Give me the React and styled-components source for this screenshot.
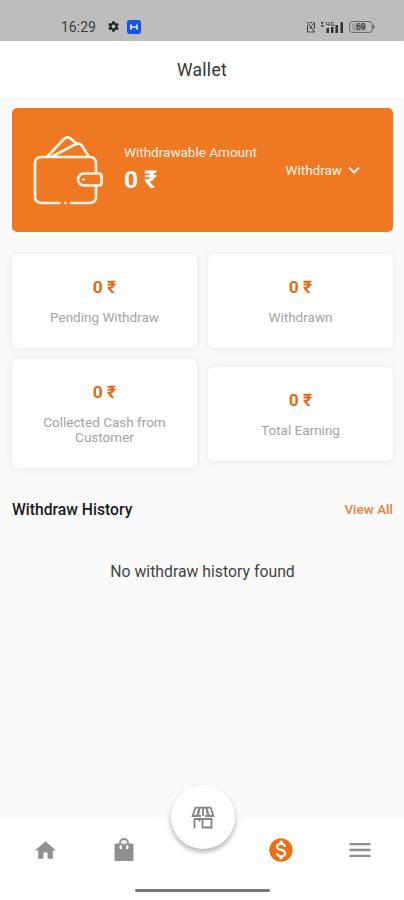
import React from "react";
import styled, { createGlobalStyle } from "styled-components";
import {
  MdHome,
  MdMenu,
  MdMonetizationOn,
  MdSettings,
} from "react-icons/md";

const GlobalStyle = createGlobalStyle`
  * {
    box-sizing: border-box;
  }

  body {
    background: #fafafa;
    font-family: Roboto, "Noto Sans", sans-serif;
    margin: 0;
  }
`;

const Screen = styled.div`
  background: #fafafa;
  display: flex;
  flex-direction: column;
  height: 900px;
  overflow: hidden;
  width: 404px;
`;

const StatusBar = styled.div`
  align-items: center;
  background: #bdbdbd;
  color: #222;
  display: flex;
  flex: none;
  height: 41px;
  justify-content: space-between;
  padding: 12px 29px 0 61px;
`;

const StatusGroup = styled.div`
  align-items: center;
  display: flex;
  gap: ${({ $gap }) => $gap}px;
`;

const Clock = styled.span`
  color: #3c3c3c;
  font-size: 14px;
  line-height: 16px;
  margin-right: 4px;
`;

const Header = styled.header`
  align-items: center;
  background: #fff;
  box-shadow: 0 1px 3px rgba(0, 0, 0, 0.03);
  display: flex;
  flex: none;
  height: 57px;
  justify-content: center;
`;

const Title = styled.h1`
  color: #333;
  font-size: 17.5px;
  font-weight: 400;
  letter-spacing: 0.3px;
  margin: 0;
`;

const Content = styled.main`
  flex: 1;
  padding: 10px 11px 0 12px;
`;

const BalanceCard = styled.section`
  align-items: center;
  background: #ef7822;
  border-radius: 5px;
  color: #fff5ea;
  display: flex;
  height: 124px;
  padding: 0 33px 0 21px;
`;

const Balance = styled.div`
  flex: 1;
  margin-left: 21px;
  padding-bottom: 2px;
`;

const BalanceLabel = styled.div`
  font-size: 13.5px;
  line-height: 16px;
`;

const BalanceAmount = styled.div`
  color: #fff;
  font-size: 24.5px;
  font-weight: 700;
  line-height: 29px;
  margin-top: 5px;
`;

const WithdrawButton = styled.button`
  align-items: center;
  background: none;
  border: 0;
  color: inherit;
  display: flex;
  font-family: inherit;
  font-size: 13.5px;
  gap: 6px;
  padding: 0;
`;

const Stats = styled.section`
  align-items: center;
  display: grid;
  gap: 11px;
  grid-template-columns: repeat(2, 1fr);
  margin-top: 22px;
`;

const StatCard = styled.div`
  background: #fff;
  border-radius: 6px;
  box-shadow: 0 0 7px rgba(0, 0, 0, 0.08);
  padding: 23px 20px 23px;
  text-align: center;
`;

const StatValue = styled.div`
  color: #e26a10;
  font-size: 17.4px;
  font-weight: 700;
  line-height: 21px;
`;

const StatLabel = styled.div`
  color: #a3a3a3;
  font-size: 13.5px;
  line-height: 15px;
  margin-top: 12px;
`;

const HistoryHeader = styled.div`
  align-items: center;
  display: flex;
  justify-content: space-between;
  margin-top: 32px;
`;

const HistoryTitle = styled.h2`
  color: #1a1a1a;
  font-size: 15.7px;
  font-weight: 500;
  line-height: 20px;
  margin: 0;
`;

const ViewAll = styled.a`
  color: #ec8138;
  font-size: 13.5px;
  font-weight: 500;
  line-height: 15px;
  padding-bottom: 1px;
`;

const EmptyText = styled.p`
  color: #444;
  font-size: 15.8px;
  line-height: 20px;
  margin: 42px 0 0;
  text-align: center;
`;

const BottomBar = styled.footer`
  flex: none;
  height: 82px;
  position: relative;
`;

const BarShape = styled.svg`
  display: block;
  left: 0;
  position: absolute;
  top: 0;
`;

const Nav = styled.nav`
  color: #8f8f8f;
  display: grid;
  grid-template-columns: 90px 68px 88px 70px 88px;
  height: 64px;
  position: relative;
`;

const NavItem = styled.a`
  align-items: center;
  color: ${({ $active }) => ($active ? "#ea6f12" : "inherit")};
  display: flex;
  justify-content: center;
`;

const StoreButton = styled.button`
  align-items: center;
  background: #fff;
  border: 0;
  border-radius: 50%;
  box-shadow: 0 3px 5px rgba(0, 0, 0, 0.28);
  color: #858585;
  display: flex;
  height: 64px;
  justify-content: center;
  left: 171px;
  padding: 0;
  position: absolute;
  top: -33px;
  width: 64px;
`;

const HomeIndicator = styled.div`
  background: #777;
  border-radius: 2px;
  height: 3px;
  margin: 7px auto 0;
  position: relative;
  width: 135px;
`;

const WalletIcon = () => (
  <svg
    width="70"
    height="72"
    viewBox="0 0 70 72"
    fill="none"
    stroke="#fff3e6"
    strokeWidth="2.7"
    strokeLinecap="round"
    strokeLinejoin="round"
  >
    <path d="M26.500 69H8.500Q2 69 2 62.500V29.500Q2 23 8.500 23H56.500Q63 23 63 29.500V39" />
    <path d="M63 52V62.500Q63 69 56.500 69H38M32.300 69h.1" />
    <path d="M66 39.500H51a6 6 0 0 0 0 12H66Q68.500 51.500 68.500 49V42Q68.500 39.500 66 39.500Z" />
    <path d="M50.500 45.500h.1" />
    <path d="M15 22L31 5Q34 2.200 37.500 4.500L44 10M20 22L42 10.500Q47 8 49.500 12.500L55.500 22.500" />
  </svg>
);

const ChevronIcon = () => (
  <svg width="12" height="8" viewBox="0 0 12 8" fill="none">
    <path d="M1 1.500L6 6.500L11 1.500" stroke="currentColor" strokeWidth="2" />
  </svg>
);

const AppBadgeIcon = () => (
  <svg width="14" height="14" viewBox="0 0 14 14">
    <rect width="14" height="14" rx="2.500" fill="#1556e8" />
    <path
      d="M4 4.500v5M10 4.500v5M4 7h6"
      stroke="#dfe9ff"
      strokeWidth="1.700"
    />
  </svg>
);

const VibrateIcon = () => (
  <svg width="10" height="12" viewBox="0 0 10 12" fill="none" stroke="#3a3a3a">
    <path d="M1 1l7.500 10M1.500 4v7h2.500M8.500 8V1.500L6 4.500M3.500 1.500h3M5 11h3.500M4 8l2-3" />
  </svg>
);

const SignalIcon = () => (
  <svg width="23" height="12" viewBox="0 0 23 12" fill="#333">
    <path d="M0 1h2.500v1.500H0zM0 4h2.500v1.500H0zM5.500 7H8v5H5.500zM10 6h2.500v6H10zM14.500 4H17v8h-2.500zM19.500 1H22v11h-2.500z" />
    <path
      d="M5.500 1v2.500h3M8 1v4M13 1.500h-2.500v3H13V3"
      fill="none"
      stroke="#555"
    />
  </svg>
);

const BatteryIcon = () => (
  <svg width="26" height="12" viewBox="0 0 26 12">
    <rect
      x=".6"
      y=".6"
      width="22.500"
      height="10.800"
      rx="2.500"
      fill="none"
      stroke="#666"
    />
    <rect x="3" y="2.500" width="14" height="7" rx="1" fill="#a0a0a0" />
    <path d="M24 3.500q3 2.500 0 5z" fill="#555" />
    <text x="7" y="9" fontSize="8.500" fontWeight="500" fill="#333">
      69
    </text>
  </svg>
);

const BagIcon = () => (
  <svg width="20" height="24" viewBox="0 0 20 24">
    <path
      d="M2 5.500h16q1.500 0 1.500 1.500v14.500q0 1.500-1.500 1.500H2Q.5 23 .5 21.500V7q0-1.500 1.500-1.500z"
      fill="currentColor"
    />
    <path
      d="M6 9V5a4 4 0 0 1 8 0v4"
      fill="none"
      stroke="currentColor"
      strokeWidth="1.800"
    />
    <circle cx="10" cy="4.500" r="2" fill="#e6e6e6" />
    <path
      d="M6.700 8v2.300M13.300 8v2.300"
      stroke="#fff"
      strokeWidth="2.200"
      strokeLinecap="round"
    />
  </svg>
);

const StoreIcon = () => (
  <svg
    width="24"
    height="23"
    viewBox="0 0 24 23"
    fill="none"
    stroke="currentColor"
    strokeWidth="1.800"
  >
    <path d="M4 1.700h16M4.500 1.500L1.500 10H6L8.500 2M19.500 1.500L22.500 10H18L15.500 2M12 2v8M7 10h3M14 10h3" />
    <path d="M9 2L7.500 9.500M15 2l1.500 7.500" strokeWidth="1" />
    <path d="M3.500 12.500v10M3 13h18M8.500 13v2.500M11.500 13h9v8.500h-9z" />
  </svg>
);

const stats = [
  { label: "Pending Withdraw", value: "0 ₹" },
  { label: "Withdrawn", value: "0 ₹" },
  { label: "Collected Cash from Customer", value: "0 ₹" },
  { label: "Total Earning", value: "0 ₹" },
];

const App = () => (
  <>
    <GlobalStyle />
    <Screen>
      <StatusBar>
        <StatusGroup $gap={7}>
          <Clock>16:29</Clock>
          <MdSettings size={13} />
          <AppBadgeIcon />
        </StatusGroup>
        <StatusGroup $gap={5}>
          <VibrateIcon />
          <SignalIcon />
          <BatteryIcon />
        </StatusGroup>
      </StatusBar>

      <Header>
        <Title>Wallet</Title>
      </Header>

      <Content>
        <BalanceCard>
          <WalletIcon />
          <Balance>
            <BalanceLabel>Withdrawable Amount</BalanceLabel>
            <BalanceAmount>0 ₹</BalanceAmount>
          </Balance>
          <WithdrawButton>
            Withdraw
            <ChevronIcon />
          </WithdrawButton>
        </BalanceCard>

        <Stats>
          {stats.map(({ label, value }) => (
            <StatCard key={label}>
              <StatValue>{value}</StatValue>
              <StatLabel>{label}</StatLabel>
            </StatCard>
          ))}
        </Stats>

        <HistoryHeader>
          <HistoryTitle>Withdraw History</HistoryTitle>
          <ViewAll>View All</ViewAll>
        </HistoryHeader>
        <EmptyText>No withdraw history found</EmptyText>
      </Content>

      <BottomBar>
        <BarShape width="404" height="82" viewBox="0 0 404 82">
          <path
            d="M0 0H154C163 0 166 4 168 9C174 25 186 36 203 36C220 36 232 25 238 9C240 4 243 0 252 0H404V82H0Z"
            fill="#fff"
          />
        </BarShape>
        <Nav>
          <NavItem>
            <MdHome size={25} />
          </NavItem>
          <NavItem>
            <BagIcon />
          </NavItem>
          <span />
          <NavItem $active>
            <MdMonetizationOn size={28} />
          </NavItem>
          <NavItem>
            <MdMenu size={28} />
          </NavItem>
        </Nav>
        <StoreButton>
          <StoreIcon />
        </StoreButton>
        <HomeIndicator />
      </BottomBar>
    </Screen>
  </>
);

export default App;
